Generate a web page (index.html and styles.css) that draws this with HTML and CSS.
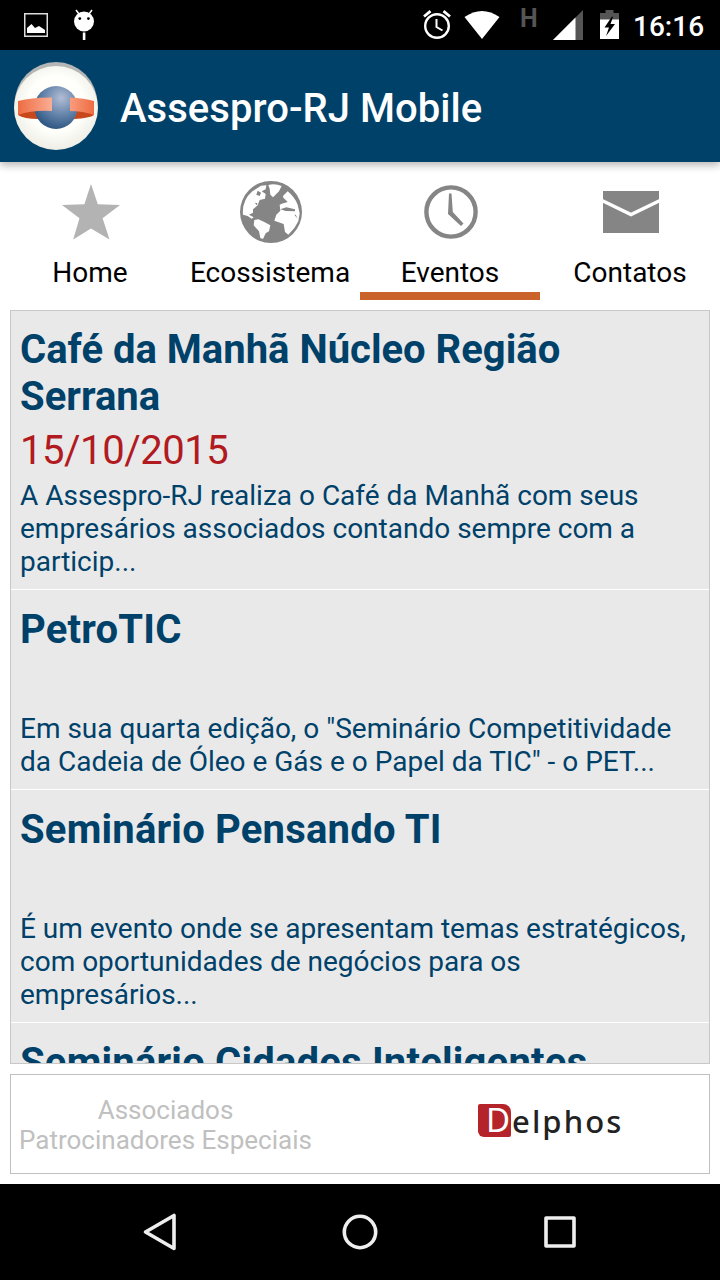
FILE: index.html
```html
<!DOCTYPE html>
<html lang="pt-BR">
<head>
  <meta charset="UTF-8">
  <title>Assespro-RJ Mobile</title>
  <link rel="stylesheet" href="styles.css">
</head>
<body>

<div class="status">
  <svg class="status_picture" width="24" height="24" viewBox="0 0 24 24">
    <rect x="0.75" y="0.75" width="22.5" height="22.5" fill="none" stroke="#ddd" stroke-width="1.5"/>
    <path d="M3 20V15L7.5 11L11 15L15 13L18 15L21 17V20Z" fill="#fff"/>
  </svg>
  <svg class="status_droid" width="22" height="32" viewBox="0 0 22 32">
    <path d="M3 1L6 5M19 1L16 5" stroke="#fff" stroke-width="1.5"/>
    <circle cx="11" cy="12.5" r="10" fill="#fff"/>
    <circle cx="6.8" cy="9.6" r="1.4"/>
    <circle cx="15.4" cy="9.6" r="1.4"/>
    <rect x="9.8" y="23.5" width="2.6" height="7.5" fill="#fff"/>
  </svg>

  <svg class="status_alarm" width="28" height="30" viewBox="0 0 28 30">
    <g fill="none" stroke="#fff">
      <circle cx="14" cy="16" r="11.8" stroke-width="2.4"/>
      <path d="M1 6.5L7.5 1.2M27 6.5L20.5 1.2" stroke-width="2.8"/>
      <path d="M13.5 9V17L19.5 20.5" stroke-width="2"/>
    </g>
  </svg>
  <svg class="status_wifi" width="36" height="28" viewBox="0 0 36 28">
    <path d="M0.5 6Q18 -6 35.5 6L18 28Z" fill="#fff"/>
  </svg>
  <span class="status_net">H</span>
  <svg class="status_signal" width="30" height="30" viewBox="0 0 30 30">
    <path d="M0 30L30 0V30Z" fill="#555"/>
    <path d="M0 30L22.5 7.5V30Z" fill="#fff"/>
  </svg>
  <svg class="status_battery" width="19" height="29" viewBox="0 0 19 29">
    <path d="M0 10V3H5.5V0H13.5V3H19V10Z" fill="#555"/>
    <rect y="9.5" width="19" height="19.5" fill="#fff"/>
    <path d="M12 6.5L4.5 17.5H9L6 26L15 14H10.5L13 7Z"/>
  </svg>
  <span class="status_time">16:16</span>
</div>

<header class="header">
  <svg class="header_logo" width="84" height="88" viewBox="0 0 84 88">
    <defs>
      <radialGradient id="disc" cx="0.5" cy="0.45" r="0.55">
        <stop offset="0.6" stop-color="#fffffb"/>
        <stop offset="1" stop-color="#eeeee6"/>
      </radialGradient>
      <radialGradient id="ball" cx="0.62" cy="0.28" r="0.75">
        <stop offset="0" stop-color="#b3bdd5"/>
        <stop offset="0.5" stop-color="#6887ad"/>
        <stop offset="1" stop-color="#2c5580"/>
      </radialGradient>
      <linearGradient id="band">
        <stop offset="0" stop-color="#ed6c42"/>
        <stop offset="1" stop-color="#fbad94"/>
      </linearGradient>
      <linearGradient id="band2">
        <stop offset="0" stop-color="#fa9c7d"/>
        <stop offset="1" stop-color="#ed6c42"/>
      </linearGradient>
    </defs>
    <ellipse cx="42" cy="42" rx="41.5" ry="42" fill="#b5b5b5"/>
    <ellipse cx="42" cy="46" rx="42" ry="42" fill="url(#disc)"/>
    <path d="M4 49L24 45V57Q10 57 4 53ZM80 49L60 45V57Q76 56 80 53Z" fill="#c8481c"/>
    <circle cx="42" cy="45.5" r="21.5" fill="url(#ball)"/>
    <path d="M4 39Q20 35 38 35.5V49Q18 48 4 53Z" fill="url(#band)"/>
    <path d="M56 35.5Q70 36 80 39V53Q69 49 56 49Z" fill="url(#band2)"/>
  </svg>
  <h1 class="header_title">Assespro-RJ Mobile</h1>
</header>

<nav class="tabs">
  <a class="tab">
    <svg class="tab_icon" width="64" height="64" viewBox="0 0 64 64">
      <path d="M32 4L38.8 24.2L61 25L43.6 38.2L50.5 59.5L32 48.5L14.2 59.5L20.5 38.2L3 25L25.4 24.2Z" fill="#b3b3b3"/>
    </svg>
    <span>Home</span>
  </a>
  <a class="tab">
    <svg class="tab_icon" width="64" height="64" viewBox="0 0 192 192">
      <circle cx="96" cy="96" r="93" fill="#858585"/>
      <g fill="#fff">
        <path d="M88 15Q108 10 128 18L120 34L102 52L94 44L92 26Z"/>
        <path d="M40 34L66 17L82 16L80 28L68 34L80 42L78 56L62 60L56 76L42 88L42 98L30 104L44 112L38 116L26 108L12 104Q8 62 40 34Z"/>
        <path d="M46 120L58 118L76 126L94 136L90 154L80 160L72 177L64 174L60 154L44 136Z"/>
        <path d="M146 34Q166 50 176 74L182 100L178 124L166 144L148 164L138 156L134 132L106 122L112 104L124 92L122 74L136 68L132 48Z"/>
      </g>
      <path d="M124 88L142 82L168 88L168 94L140 93ZM48 68L56 70L52 76ZM130 52L138 58L146 66L134 70ZM56 32L66 38L62 48L52 44ZM166 104L170 104L176 116Z" fill="#858585"/>
    </svg>
    <span>Ecossistema</span>
  </a>
  <a class="tab tab--active">
    <svg class="tab_icon" width="64" height="64" viewBox="0 0 64 64">
      <circle cx="32" cy="32" r="24.6" fill="none" stroke="#858585" stroke-width="4.4"/>
      <path d="M30 13.5H32.5L33.8 32L44.5 43.5L42 46L29 34Z" fill="#858585"/>
    </svg>
    <span>Eventos</span>
  </a>
  <a class="tab">
    <svg class="tab_icon" width="64" height="64" viewBox="0 0 64 64">
      <rect x="4" y="11" width="56" height="42" fill="#858585"/>
      <path d="M3 20.5L32 34.5L61 20.5" fill="none" stroke="#fff" stroke-width="3.4"/>
    </svg>
    <span>Contatos</span>
  </a>
</nav>

<main class="events">
  <article class="event">
    <h2 class="event_title">Café da Manhã Núcleo Região Serrana</h2>
    <p class="event_date">15/10/2015</p>
    <p class="event_text">A Assespro-RJ realiza o Café da Manhã com seus empresários associados contando sempre com a particip...</p>
  </article>
  <article class="event">
    <h2 class="event_title">PetroTIC</h2>
    <p class="event_date"></p>
    <p class="event_text">Em sua quarta edição, o "Seminário Competitividade da Cadeia de Óleo e Gás e o Papel da TIC" - o PET...</p>
  </article>
  <article class="event">
    <h2 class="event_title">Seminário Pensando TI</h2>
    <p class="event_date"></p>
    <p class="event_text">É um evento onde se apresentam temas estratégicos, com oportunidades de negócios para os empresários...</p>
  </article>
  <article class="event">
    <h2 class="event_title">Seminário Cidades Inteligentes</h2>
  </article>
</main>

<footer class="sponsors">
  <p class="sponsors_text">Associados<br>Patrocinadores Especiais</p>
  <div class="delphos"><span class="delphos_d">D</span><span class="delphos_name">elphos</span></div>
</footer>

<div class="navbar">
  <svg class="navbar_icon" width="40" height="40" viewBox="0 0 40 40">
    <path d="M5.5 20L34 3.5V36.5Z"/>
  </svg>
  <svg class="navbar_icon" width="40" height="40" viewBox="0 0 40 40">
    <circle cx="20" cy="20" r="15.7"/>
  </svg>
  <svg class="navbar_icon" width="40" height="40" viewBox="0 0 40 40">
    <rect x="6" y="6" width="28" height="28"/>
  </svg>
</div>

</body>
</html>
```

FILE: styles.css
```css
* {
  padding: 0;
  margin: 0;
  box-sizing: border-box;
}

body {
  width: 720px;
  height: 1280px;
  display: flex;
  flex-direction: column;
  overflow: hidden;
  background: #fff;
  font-family: Roboto, sans-serif;
}

svg {
  display: block;
  flex: none;
}

.status {
  height: 50px;
  flex: none;
  display: flex;
  align-items: flex-start;
  padding-left: 24px;
  background: #000;
  color: #fff;
}

.status_picture { margin-top: 13px; }
.status_droid { margin: 9px 0 0 25px; }
.status_alarm { margin: 10px 0 0 328px; }
.status_wifi { margin: 11px 0 0 13px; }

.status_net {
  width: 18px;
  margin: 4px 0 0 20px;
  font-size: 25px;
  font-weight: bold;
  line-height: 29px;
  color: #555;
}

.status_signal { margin: 10px 0 0 15px; }
.status_battery { margin: 10px 0 0 17px; }

.status_time {
  margin: 10px 0 0 14px;
  font-size: 28px;
  font-weight: 500;
  line-height: 33px;
}

.header {
  height: 112px;
  flex: none;
  display: flex;
  align-items: center;
  gap: 22px;
  padding-left: 14px;
  background: #00416a;
  box-shadow: 0 3px 8px rgba(0, 0, 0, 0.3);
}

.header_title {
  padding-top: 4px;
  font-size: 40px;
  font-weight: 500;
  line-height: 47px;
  letter-spacing: 0.05px;
  color: #fff;
}

.tabs {
  height: 138px;
  flex: none;
  display: grid;
  grid-template-columns: repeat(4, 1fr);
}

.tab {
  display: flex;
  flex-direction: column;
  align-items: center;
  gap: 12px;
  padding-top: 18px;
  border-bottom: 8px solid transparent;
  font-size: 28px;
  line-height: 33px;
  color: #000;
}

.tab_icon {
  margin: 0 -1px 0 1px;
}

.tab--active {
  border-color: #ca642b;
}

.events {
  height: 754px;
  flex: none;
  margin: 10px 10px 0;
  overflow: hidden;
  border: 1px solid #c8c8c8;
  background: #e9e9e9;
}

.event {
  display: flex;
  flex-direction: column;
  gap: 6px;
  padding: 16px 9px 11px;
  border-bottom: 1px solid #fff;
  color: #00416a;
}

.event_title {
  font-size: 40px;
  line-height: 47px;
  letter-spacing: 0.2px;
}

.event:first-child { padding-top: 15px; }
.event:first-child .event_title { letter-spacing: 0; }

.event_date {
  height: 47px;
  padding-top: 1px;
  font-size: 40px;
  line-height: 47px;
  letter-spacing: -0.45px;
  color: #b11a1f;
}

.event_text {
  font-size: 28px;
  line-height: 33px;
}

.sponsors {
  height: 100px;
  flex: none;
  display: grid;
  grid-template-columns: 309px 1fr;
  align-items: center;
  margin: 10px 10px;
  border: 1px solid #c0c0c0;
}

.sponsors_text {
  padding-top: 2px;
  font-size: 26px;
  line-height: 30px;
  text-align: center;
  color: #c0c0c0;
}

.delphos {
  display: flex;
  align-items: center;
  padding: 0 0 7px 158px;
  font-family: "Noto Sans", sans-serif;
  color: #222;
}

.delphos_d {
  width: 33px;
  height: 33px;
  padding-left: 8px;
  border-radius: 2px 8px 2px 6px;
  background: #b5242b;
  font-size: 33px;
  line-height: 32px;
  color: #fff;
}

.delphos_name {
  padding-left: 1px;
  font-size: 31px;
  font-weight: 500;
  line-height: 34px;
  letter-spacing: 2.1px;
}

.navbar {
  flex: 1;
  display: flex;
  justify-content: center;
  align-items: center;
  gap: 160px;
  background: #000;
}

.navbar_icon {
  fill: none;
  stroke: #eee;
  stroke-width: 3.6;
  stroke-linejoin: round;
}
```
